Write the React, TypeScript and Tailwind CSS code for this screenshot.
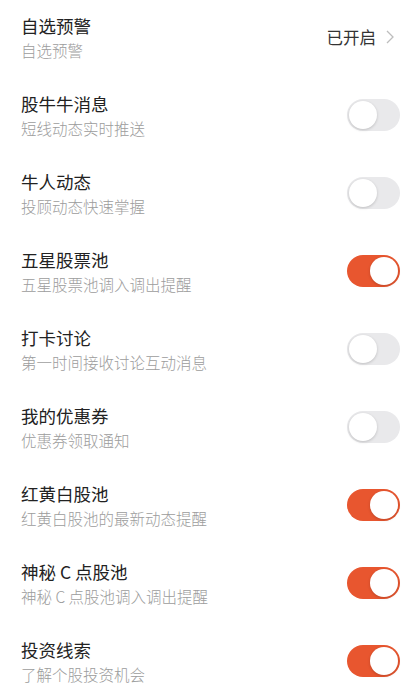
import React, { useState } from 'react';

type Item = {
  id: number;
  title: string;
  desc: string;
  on?: boolean;
  link?: string;
};

const items: Item[] = [
  { id: 1, title: '自选预警', desc: '自选预警', link: '已开启' },
  { id: 2, title: '股牛牛消息', desc: '短线动态实时推送', on: false },
  { id: 3, title: '牛人动态', desc: '投顾动态快速掌握', on: false },
  { id: 4, title: '五星股票池', desc: '五星股票池调入调出提醒', on: true },
  { id: 5, title: '打卡讨论', desc: '第一时间接收讨论互动消息', on: false },
  { id: 6, title: '我的优惠券', desc: '优惠券领取通知', on: false },
  { id: 7, title: '红黄白股池', desc: '红黄白股池的最新动态提醒', on: true },
  { id: 8, title: '神秘 C 点股池', desc: '神秘 C 点股池调入调出提醒', on: true },
  { id: 9, title: '投资线索', desc: '了解个股投资机会', on: true },
];

const Toggle = ({ on, onClick }: { on: boolean; onClick: () => void }) => (
  <button
    onClick={onClick}
    className={`relative w-[53px] h-[32px] rounded-full transition-colors ${
      on ? 'bg-[#e8562f]' : 'bg-[#e9e9eb]'
    }`}
  >
    <span
      className={`absolute top-[2px] w-[28px] h-[28px] rounded-full bg-white shadow-[0_1px_3px_rgba(0,0,0,0.18)] transition-all ${
        on ? 'left-[23px]' : 'left-[2px]'
      }`}
    />
  </button>
);

const App = () => {
  const [state, setState] = useState<Record<number, boolean>>(
    Object.fromEntries(items.map((it) => [it.id, !!it.on])),
  );

  return (
    <div
      className="w-full h-[698px] overflow-hidden bg-white"
      style={{ fontFamily: '"Noto Sans CJK SC", "Noto Sans", sans-serif' }}
    >
      <div className="-mt-[2px]">
        {items.map((it) => (
          <div key={it.id} className="h-[78px] flex items-center pl-[21px] pr-[19px]">
            <div className="flex-1 flex flex-col">
              <div className="text-[17.5px] leading-[22px] text-[#222]">{it.title}</div>
              <div className="mt-[3px] text-[15.5px] leading-[20px] font-light text-[#9c9c9c]">
                {it.desc}
              </div>
            </div>
            {it.link ? (
              <div className="flex items-center gap-[10px] pr-[6px]">
                <span className="text-[16.5px] text-[#333]">{it.link}</span>
                <svg width="8" height="14" viewBox="0 0 8 14" fill="none">
                  <path d="M1 1l6 6-6 6" stroke="#bdbdbd" strokeWidth="1.3" />
                </svg>
              </div>
            ) : (
              <Toggle
                on={state[it.id]}
                onClick={() => setState((s) => ({ ...s, [it.id]: !s[it.id] }))}
              />
            )}
          </div>
        ))}
      </div>
    </div>
  );
};

export default App;
